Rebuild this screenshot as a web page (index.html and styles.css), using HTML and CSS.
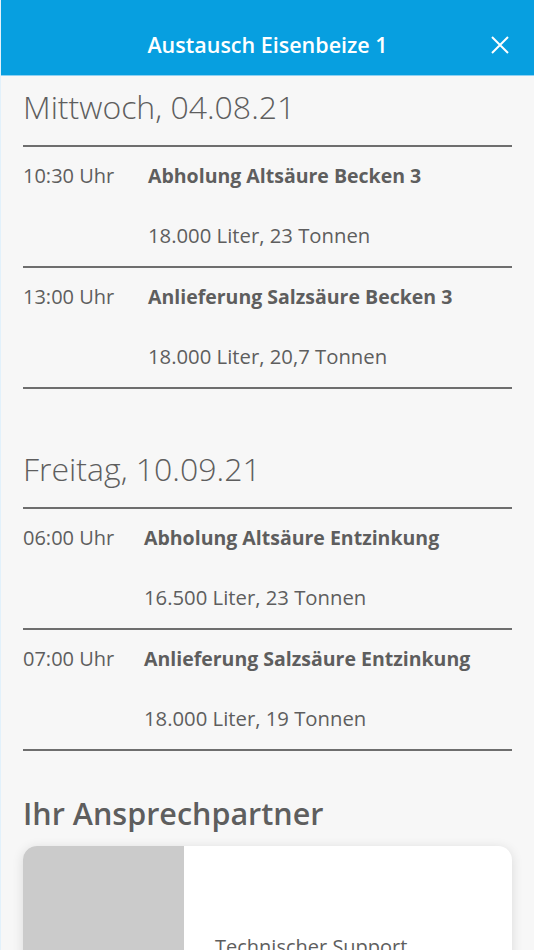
FILE: index.html
```html
<!DOCTYPE html>
<html lang="de">

<head>
  <meta charset="UTF-8" />
  <meta name="viewport" content="width=device-width, initial-scale=1.0" />
  <title>Austausch Eisenbeize 1</title>
  <link rel="stylesheet" href="styles.css">
</head>

<body>

  <div class="modal">
    <!-- Kopfzeile -->
    <header class="modal-header">
      <span class="spacer"></span>
      <h1>Austausch Eisenbeize 1</h1>
      <button class="close-btn" aria-label="Schließen">
        <svg width="20" height="20" viewBox="0 0 20 20">
          <path d="M2 2 L18 18 M18 2 L2 18" stroke="#fff" stroke-width="2" fill="none" />
        </svg>
      </button>
    </header>

    <main class="content">
      <!-- Termine -->
      <section class="day">
        <h2>Mittwoch, 04.08.21</h2>
        <div class="appointments wide">
          <div class="appointment">
            <span class="time">10:30 Uhr</span>
            <span class="title">Abholung Altsäure Becken 3</span>
            <span class="amount">18.000 Liter, 23 Tonnen</span>
          </div>
          <div class="appointment">
            <span class="time">13:00 Uhr</span>
            <span class="title">Anlieferung Salzsäure Becken 3</span>
            <span class="amount">18.000 Liter, 20,7 Tonnen</span>
          </div>
        </div>
      </section>

      <section class="day">
        <h2>Freitag, 10.09.21</h2>
        <div class="appointments">
          <div class="appointment">
            <span class="time">06:00 Uhr</span>
            <span class="title">Abholung Altsäure Entzinkung</span>
            <span class="amount">16.500 Liter, 23 Tonnen</span>
          </div>
          <div class="appointment">
            <span class="time">07:00 Uhr</span>
            <span class="title">Anlieferung Salzsäure Entzinkung</span>
            <span class="amount">18.000 Liter, 19 Tonnen</span>
          </div>
        </div>
      </section>

      <!-- Kontakt -->
      <section class="contact">
        <h2>Ihr Ansprechpartner</h2>
        <div class="contact-card">
          <div class="contact-photo"></div>
          <div class="contact-info">
            <p class="contact-role">Technischer Support</p>
          </div>
        </div>
      </section>
    </main>
  </div>

</body>

</html>
```

FILE: styles.css
```css
:root {
  --blue: #079fe0;
  --text: #5e5e5e;
  --line: #6e6e6e;
  --bg: #f7f7f7;
}

* {
  margin: 0;
  padding: 0;
  box-sizing: border-box;
  font-family: 'Open Sans', sans-serif;
}

body {
  background-color: #e2f1fb;
  overflow: hidden;
}

.modal {
  margin-left: 1px;
  min-height: 100vh;
  background-color: var(--bg);
}

/* Header */
.modal-header {
  display: grid;
  grid-template-columns: 60px 1fr 60px;
  align-items: center;
  height: 76px;
  padding-top: 14px;
  background-color: var(--blue);
  border-bottom: 1px solid #8ed1f3;
}

.modal-header h1 {
  color: white;
  font-size: 21.5px;
  font-weight: 600;
  text-align: center;
}

.close-btn {
  background: none;
  border: none;
  cursor: pointer;
  display: flex;
  justify-content: flex-end;
  padding-right: 24px;
}

/* Content */
.content {
  padding: 0 22px 0 22px;
  color: var(--text);
}

.day {
  margin-top: 61px;
}

.day:first-child {
  margin-top: 12px;
}

.day h2 {
  font-size: 32px;
  font-weight: 300;
  line-height: 38px;
  margin-bottom: 19px;
}

.appointments {
  border-top: 2px solid var(--line);
}

.appointment {
  display: grid;
  grid-template-columns: 125px 1fr;
  grid-template-rows: 56px 63px;
  align-items: center;
  border-bottom: 2px solid var(--line);
  font-size: 20px;
}

.appointments:not(.wide) .appointment {
  grid-template-columns: 121px 1fr;
}

.appointment .title {
  font-weight: 700;
  font-size: 19.5px;
}

.appointment .amount {
  grid-column: 2;
  font-size: 20.3px;
}

/* Contact */
.contact h2 {
  margin-top: 43px;
  font-size: 30.5px;
  font-weight: 600;
  line-height: 38px;
  margin-bottom: 14px;
}

.contact-card {
  display: flex;
  height: 200px;
  border-radius: 14px;
  overflow: hidden;
  background-color: white;
  box-shadow: 0 2px 12px rgba(0, 0, 0, 0.12);
}

.contact-photo {
  width: 161px;
  background-color: #cbcbcb;
}

.contact-info {
  padding: 87px 0 0 31px;
}

.contact-role {
  font-size: 20px;
}
```
